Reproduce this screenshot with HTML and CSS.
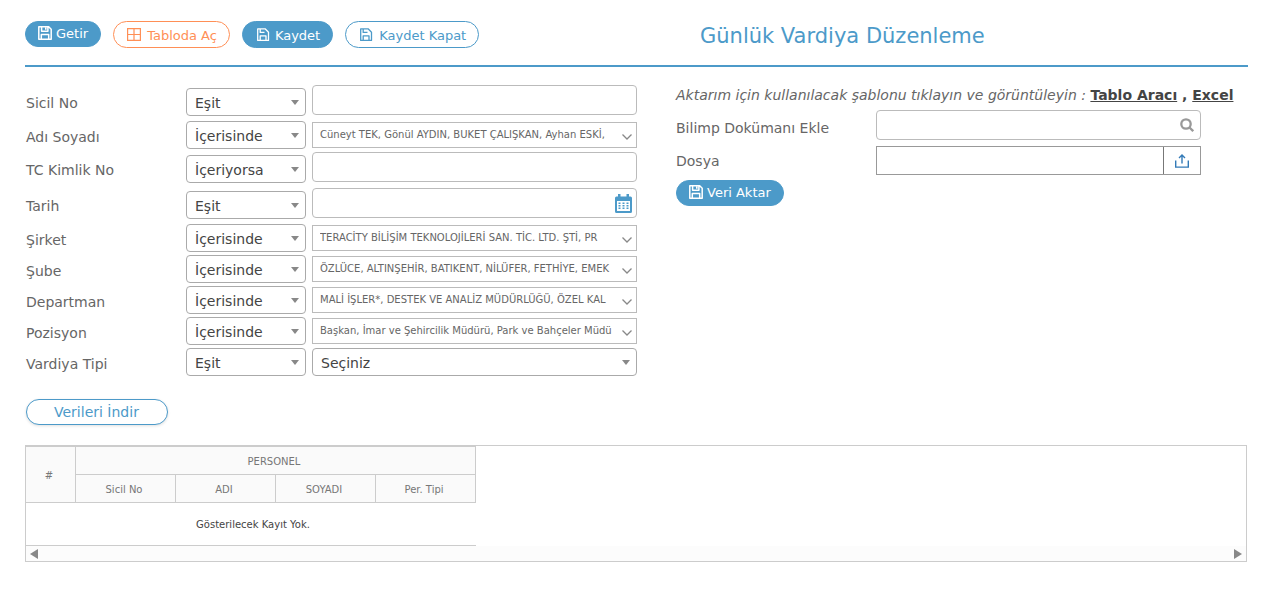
FILE: index.html
```html
<!DOCTYPE html>
<html lang="tr">
<head>
<meta charset="utf-8">
<title>Günlük Vardiya Düzenleme</title>
<link rel="stylesheet" href="styles.css">
</head>
<body>
<svg class="defs" aria-hidden="true">
  <symbol id="floppy" viewBox="0 0 14 14"><path fill="none" stroke="currentColor" stroke-width="1.5" stroke-linejoin="round" d="M.8.8h9.900l2.500 2.500v9.900H.8zM3.600.8v4.400h6.300V.8M3.300 13.200V8.500h7.400v4.700"/><path fill="currentColor" d="M7 1.200h1.600v2.600H7z"/></symbol>
  <symbol id="save" viewBox="0 0 14 14"><path fill="none" stroke="currentColor" stroke-width="1.3" stroke-linejoin="round" d="M1.700.8h7.400l3.400 3.400v8.200H1.700zM4.200 12.200V7.800h5.800v4.400M4.200 1v3.400h4.300"/></symbol>
</svg>
<header class="topbar">
  <div class="actions">
    <button class="btn btn-solid" type="button"><svg class="icon"><use href="#floppy"/></svg>Getir</button>
    <button class="btn btn-orange" type="button"><svg class="icon" viewBox="0 0 14 14"><path fill="none" stroke="currentColor" stroke-width="1.200" d="M.6.6h12.800v11.800H.6zM7 .6v11.800M.6 6.500h12.800"/></svg>Tabloda Aç</button>
    <button class="btn btn-solid btn-tall" type="button"><svg class="icon"><use href="#save"/></svg>Kaydet</button>
    <button class="btn btn-outline" type="button"><svg class="icon"><use href="#save"/></svg>Kaydet Kapat</button>
  </div>
  <h1 class="title">Günlük Vardiya Düzenleme</h1>
</header>
<main class="content">
  <div class="columns">
    <form class="filters">
      <div class="row row-text">
        <label class="label" for="sicil">Sicil No</label>
        <div class="select"><select aria-label="Sicil No koşulu"><option>Eşit</option></select></div>
        <input class="input" id="sicil" type="text">
      </div>
      <div class="row">
        <label class="label" for="ad">Adı Soyadı</label>
        <div class="select"><select aria-label="Adı Soyadı koşulu"><option>İçerisinde</option></select></div>
        <button class="multi" id="ad" type="button"><span class="multi-text">Cüneyt TEK, Gönül AYDIN, BUKET ÇALIŞKAN, Ayhan ESKİ,</span><svg class="chevron" viewBox="0 0 10 6"><path d="M.5.5 5 5 9.500.5"/></svg></button>
      </div>
      <div class="row row-text">
        <label class="label" for="tc">TC Kimlik No</label>
        <div class="select"><select aria-label="TC Kimlik No koşulu"><option>İçeriyorsa</option></select></div>
        <input class="input" id="tc" type="text">
      </div>
      <div class="row row-text">
        <label class="label" for="tarih">Tarih</label>
        <div class="select"><select aria-label="Tarih koşulu"><option>Eşit</option></select></div>
        <div class="input field">
          <input class="bare" id="tarih" type="text">
          <button class="icon-btn" type="button" aria-label="Takvim"><svg class="calendar" viewBox="0 0 17 19"><path fill="currentColor" fill-rule="evenodd" d="M3 0h2.500v2.500h6V0H14v2.500h1.500Q17 2.500 17 4v13.500Q17 19 15.500 19h-14Q0 19 0 17.500V4Q0 2.500 1.500 2.500H3zM2 7v10h13V7z"/><path fill="currentColor" d="M3.500 8.500h2v1.500h-2zm4 0h2v1.500h-2zm4 0h2v1.500h-2zM3.500 11h2v1.500h-2zm4 0h2v1.500h-2zm4 0h2v1.500h-2zM3.500 13.500h2V15h-2zm4 0h2V15h-2zm4 0h2V15h-2z"/></svg></button>
        </div>
      </div>
      <div class="row">
        <label class="label" for="sirket">Şirket</label>
        <div class="select"><select aria-label="Şirket koşulu"><option>İçerisinde</option></select></div>
        <button class="multi" id="sirket" type="button"><span class="multi-text">TERACİTY BİLİŞİM TEKNOLOJİLERİ SAN. TİC. LTD. ŞTİ, PR</span><svg class="chevron" viewBox="0 0 10 6"><path d="M.5.5 5 5 9.500.5"/></svg></button>
      </div>
      <div class="row">
        <label class="label" for="sube">Şube</label>
        <div class="select"><select aria-label="Şube koşulu"><option>İçerisinde</option></select></div>
        <button class="multi" id="sube" type="button"><span class="multi-text">ÖZLÜCE, ALTINŞEHİR, BATIKENT, NİLÜFER, FETHİYE, EMEK</span><svg class="chevron" viewBox="0 0 10 6"><path d="M.5.5 5 5 9.500.5"/></svg></button>
      </div>
      <div class="row">
        <label class="label" for="departman">Departman</label>
        <div class="select"><select aria-label="Departman koşulu"><option>İçerisinde</option></select></div>
        <button class="multi" id="departman" type="button"><span class="multi-text">MALİ İŞLER*, DESTEK VE ANALİZ MÜDÜRLÜĞÜ, ÖZEL KAL</span><svg class="chevron" viewBox="0 0 10 6"><path d="M.5.5 5 5 9.500.5"/></svg></button>
      </div>
      <div class="row">
        <label class="label" for="pozisyon">Pozisyon</label>
        <div class="select"><select aria-label="Pozisyon koşulu"><option>İçerisinde</option></select></div>
        <button class="multi" id="pozisyon" type="button"><span class="multi-text">Başkan, İmar ve Şehircilik Müdürü, Park ve Bahçeler Müdü</span><svg class="chevron" viewBox="0 0 10 6"><path d="M.5.5 5 5 9.500.5"/></svg></button>
      </div>
      <div class="row">
        <label class="label" for="vardiya">Vardiya Tipi</label>
        <div class="select"><select aria-label="Vardiya Tipi koşulu"><option>Eşit</option></select></div>
        <div class="select"><select id="vardiya"><option>Seçiniz</option></select></div>
      </div>
    </form>
    <form class="import">
      <p class="hint"><em>Aktarım için kullanılacak şablonu tıklayın ve görüntüleyin :</em> <b><a class="link" href="#">Tablo Aracı</a> , <a class="link" href="#">Excel</a></b></p>
      <div class="row-import">
        <label class="label" for="dokuman">Bilimp Dokümanı Ekle</label>
        <div class="input field">
          <input class="bare" id="dokuman" type="text">
          <button class="icon-btn" type="button" aria-label="Ara"><svg class="search" viewBox="0 0 14 14"><circle cx="6" cy="6" r="4.700"/><path d="m9.500 9.500 3.700 3.700"/></svg></button>
        </div>
      </div>
      <div class="row-import">
        <label class="label" for="dosya">Dosya</label>
        <div class="file">
          <input class="bare" id="dosya" type="text">
          <button class="upload" type="button" aria-label="Yükle"><svg class="icon" viewBox="0 0 14 14"><path fill="none" stroke="currentColor" stroke-width="1.400" d="M.7 6.500v6.600h12.600V6.500M7 9.500V1.200M4 4l3-3 3 3"/></svg></button>
        </div>
      </div>
      <button class="btn btn-solid" type="button"><svg class="icon"><use href="#floppy"/></svg>Veri Aktar</button>
    </form>
  </div>
  <button class="btn btn-outline btn-download" type="button">Verileri İndir</button>
  <section class="grid">
    <table class="table">
      <colgroup><col class="col-no"><col><col><col><col></colgroup>
      <thead>
        <tr><th rowspan="2">#</th><th colspan="4">PERSONEL</th></tr>
        <tr><th>Sicil No</th><th>ADI</th><th>SOYADI</th><th>Per. Tipi</th></tr>
      </thead>
      <tbody><tr><td colspan="5">Gösterilecek Kayıt Yok.</td></tr></tbody>
    </table>
    <div class="scrollbar"><span class="arrow arrow-left"></span><span class="arrow arrow-right"></span></div>
  </section>
</main>
</body>
</html>
```
FILE: styles.css
```css
* { box-sizing: border-box; }
body {
  margin: 0;
  padding: 0 22px 0 25px;
  background: #fff;
  color: #666;
  font: 14px/20px Verdana, "DejaVu Sans", sans-serif;
}
button, input, select { font: inherit; color: inherit; margin: 0; }
button { cursor: pointer; }
.defs { position: absolute; width: 0; height: 0; }

.topbar {
  display: grid;
  grid-template-columns: 675px 1fr;
  height: 67px;
  padding-top: 21px;
  border-bottom: 2px solid #4c9ac9;
}
.actions { display: flex; align-items: flex-start; gap: 12px; }
.title { margin: 0; font-size: 21px; line-height: 30px; font-weight: 400; color: #4c9ac9; }

.btn {
  display: inline-flex;
  align-items: center;
  gap: 4px;
  height: 26px;
  padding: 0 12px;
  border: 1px solid #4c9ac9;
  border-radius: 14px;
  background: #fff;
  color: #4c9ac9;
  font-size: 13px;
  white-space: nowrap;
}
.btn-solid { background: #4c9ac9; color: #fff; }
.btn-orange, .btn-outline, .btn-tall { gap: 5px; height: 27px; padding: 2px 12px 0 13px; }
.btn-orange { gap: 6px; border-color: #ff8f56; color: #ff8f56; }
.btn-outline { gap: 6px; }
.icon { width: 14px; height: 14px; flex: none; }
.topbar .icon, .import .btn .icon { margin-bottom: 2px; }

.columns { display: grid; grid-template-columns: 650px 1fr; padding: 18px 0 0 1px; }
.row {
  display: grid;
  grid-template-columns: 160px 120px minmax(0, 331px);
  align-items: start;
  height: 31px;
}
.row > :nth-child(3) { margin-left: 6px; }
.label { line-height: 20px; padding-top: 6px; }
.row-text { height: 36px; }
.row-text .label { padding-top: 8px; }
.row-text .select { margin-top: 3px; }

.select { position: relative; height: 28px; }
.select select {
  width: 100%;
  height: 28px;
  padding: 1px 20px 0 8px;
  border: 1px solid #aaa;
  border-radius: 4px;
  background: #fff;
  color: #444;
  appearance: none;
}
.select::after {
  content: "";
  position: absolute;
  right: 7px;
  top: 12px;
  border: 4px solid transparent;
  border-top: 5px solid #888;
  border-bottom: 0;
  pointer-events: none;
}
.input { height: 30px; border: 1px solid #bbb; border-radius: 4px; background: #fff; min-width: 0; }
.field { display: flex; align-items: center; padding-right: 4px; }
.bare { flex: 1; min-width: 0; height: 100%; border: 0; background: none; }
.icon-btn { display: flex; padding: 0; border: 0; background: none; }
.calendar { width: 17px; height: 19px; color: #4c9ac9; }
.search { width: 14px; height: 14px; margin-right: 2px; fill: none; stroke: #999; stroke-width: 2.3; }

.multi {
  display: flex;
  align-items: center;
  gap: 6px;
  height: 26px;
  margin-top: 1px;
  padding: 0 4px 0 7px;
  border: 1px solid #bbb;
  background: #fff;
  font-size: 10px;
  text-align: left;
}
.multi-text { flex: 1; overflow: hidden; white-space: nowrap; }
.chevron { width: 10px; height: 6px; margin-top: 4px; fill: none; stroke: #888; stroke-width: 1.3; }

.hint { height: 25px; margin: 0; white-space: nowrap; }
.hint b, .link { color: #444; }
.row-import {
  display: grid;
  grid-template-columns: 200px minmax(0, 325px);
  align-items: start;
  height: 36px;
}
.row-import .label { padding-top: 8px; }
.row-import + .row-import { height: 34px; }
.row-import + .row-import .label { padding-top: 5px; }
.file { display: flex; height: 29px; border: 1px solid #999; }
.upload {
  display: grid;
  place-items: center;
  width: 37px;
  padding: 0;
  border: 0;
  border-left: 1px solid #777;
  background: #fff;
  color: #337ab7;
}

.btn-download {
  height: 26px;
  margin: 20px 0 0 1px;
  padding: 0 28px 0 27px;
  font-size: 14px;
  box-shadow: 0 1px 3px rgba(0, 0, 0, .12);
}
.grid { margin: 20px 1px 0 0; border: 1px solid #ccc; }
.table { width: 450px; table-layout: fixed; border-spacing: 0; font-size: 10px; }
.col-no { width: 50px; }
.table th {
  height: 28px;
  padding: 2px 3px 0 0;
  border: 0 solid #ccc;
  border-width: 0 1px 1px 0;
  background: #fafafa;
  color: #777;
  font-weight: 400;
  line-height: 14px;
}
.table tr:first-child th { height: 29px; border-top-width: 1px; }
.table td {
  height: 43px;
  padding: 2px 0 0 4px;
  border-bottom: 1px solid #ccc;
  color: #444;
  text-align: center;
}
.scrollbar { display: flex; justify-content: space-between; height: 15px; padding: 3px 4px; background: #fcfcfc; }
.arrow { border: 5px solid transparent; }
.arrow-left { border-right: 8px solid #888; border-left: 0; }
.arrow-right { border-left: 8px solid #888; border-right: 0; }
```
